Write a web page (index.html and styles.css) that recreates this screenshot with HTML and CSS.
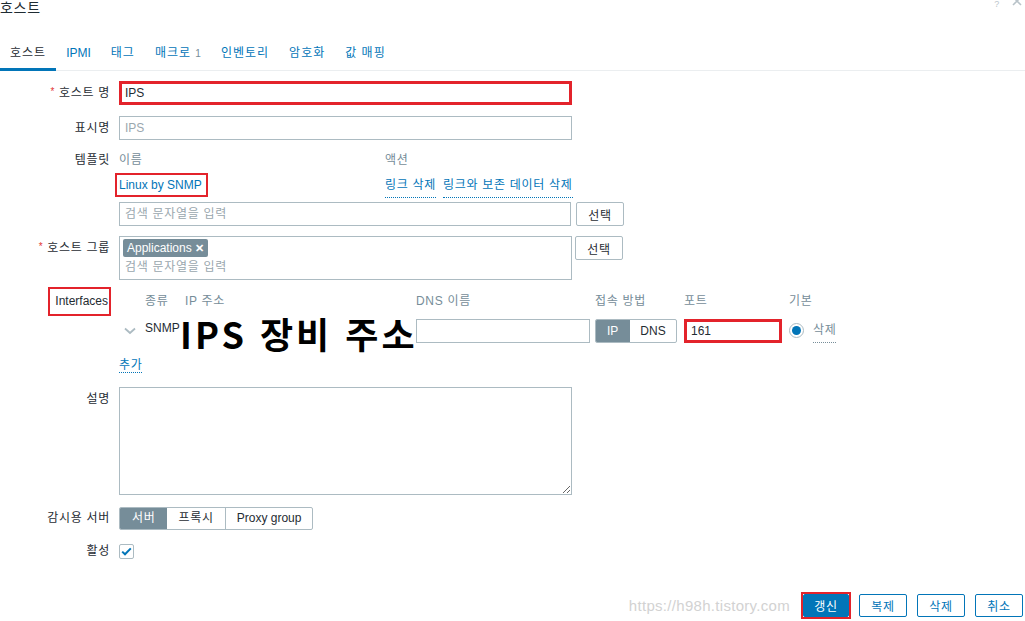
FILE: index.html
```html
<!DOCTYPE html>
<html lang="ko">
<head>
  <meta charset="UTF-8">
  <meta name="viewport" content="width=device-width, initial-scale=1.0">
  <title>호스트</title>
  <link rel="stylesheet" href="styles.css">
</head>
<body>
<div class="head">
  <h1 class="title">호스트</h1>
  <div class="head-tools">
    <span class="help">?</span>
    <span class="close">
      <svg width="10" height="10" viewBox="0 0 10 10"><path d="M1 1 L9 9 M9 1 L1 9" stroke="#b9c3c9" stroke-width="1.6" fill="none"/></svg>
    </span>
  </div>
</div>

<ul class="tabs">
  <li class="tab active">호스트</li>
  <li class="tab en">IPMI</li>
  <li class="tab">태그</li>
  <li class="tab">매크로 <span class="count en">1</span></li>
  <li class="tab">인벤토리</li>
  <li class="tab">암호화</li>
  <li class="tab">값 매핑</li>
</ul>

<form class="form">
  <div class="row r-host">
    <label class="lbl"><span class="req">*</span> 호스트 명</label>
    <div class="fld"><input class="input wide marked" type="text" value="IPS"></div>
  </div>

  <div class="row r-visible">
    <label class="lbl">표시명</label>
    <div class="fld"><input class="input wide" type="text" placeholder="IPS"></div>
  </div>

  <div class="row r-tpl-head">
    <label class="lbl">템플릿</label>
    <div class="fld tpl-grid">
      <span class="th">이름</span>
      <span class="th">액션</span>
    </div>
  </div>

  <div class="row r-tpl-link">
    <div class="lbl"></div>
    <div class="fld tpl-grid">
      <a class="link mark-link en">Linux by SNMP</a>
      <span class="actions"><a class="dotted">링크 삭제</a><a class="dotted">링크와 보존 데이터 삭제</a></span>
    </div>
  </div>

  <div class="row r-search">
    <div class="lbl"></div>
    <div class="fld with-btn">
      <input class="input search" type="text" placeholder="검색 문자열을 입력">
      <button type="button" class="btn-grey">선택</button>
    </div>
  </div>

  <div class="row r-group">
    <label class="lbl"><span class="req">*</span> 호스트 그룹</label>
    <div class="fld with-btn">
      <div class="multi">
        <span class="tag en">Applications <span class="tag-x">✕</span></span>
        <div class="multi-ph">검색 문자열을 입력</div>
      </div>
      <button type="button" class="btn-grey">선택</button>
    </div>
  </div>

  <div class="row r-if">
    <div class="lbl lbl-if"><span class="lbl-mark en">Interfaces</span></div>
    <div class="fld iface">
      <div class="if-grid if-head">
        <span></span>
        <span>종류</span>
        <span>IP 주소</span>
        <span>DNS 이름</span>
        <span>접속 방법</span>
        <span>포트</span>
        <span>기본</span>
      </div>
      <div class="if-grid if-row">
        <span class="chev">
          <svg width="12" height="8" viewBox="0 0 12 8"><path d="M1 1.5 L6 6 L11 1.5" stroke="#acbbc2" stroke-width="1.8" fill="none"/></svg>
        </span>
        <span class="if-type en">SNMP</span>
        <span><input class="input ip" type="text"></span>
        <span><input class="input dns" type="text"></span>
        <span class="seg seg-conn en">
          <span class="seg-item on">IP</span><span class="seg-item">DNS</span>
        </span>
        <span><input class="input port marked" type="text" value="161"></span>
        <span class="default">
          <span class="radio"><span class="radio-dot"></span></span>
          <a class="dotted grey">삭제</a>
        </span>
      </div>
      <div class="note-big">IPS 장비 주소</div>
    </div>
  </div>

  <div class="row r-add">
    <div class="lbl"></div>
    <div class="fld"><a class="dotted">추가</a></div>
  </div>

  <div class="row r-desc">
    <label class="lbl">설명</label>
    <div class="fld"><textarea class="input area"></textarea></div>
  </div>

  <div class="row r-server">
    <label class="lbl">감시용 서버</label>
    <div class="fld">
      <span class="seg seg-server">
        <span class="seg-item on">서버</span><span class="seg-item">프록시</span><span class="seg-item en">Proxy group</span>
      </span>
    </div>
  </div>

  <div class="row r-active">
    <label class="lbl">활성</label>
    <div class="fld">
      <span class="check">
        <svg width="11" height="9" viewBox="0 0 11 9"><path d="M1.2 4.6 L4 7.3 L9.8 1.4" stroke="#0275b8" stroke-width="2" fill="none"/></svg>
      </span>
    </div>
  </div>

  <div class="footer">
    <span class="watermark en">https://h98h.tistory.com</span>
    <span class="mark-btn"><button type="button" class="btn-main">갱신</button></span>
    <button type="button" class="btn-alt">복제</button>
    <button type="button" class="btn-alt">삭제</button>
    <button type="button" class="btn-alt">취소</button>
  </div>
</form>
</body>
</html>
```

FILE: styles.css
```css
* {
  box-sizing: border-box;
}

body {
  margin: 0;
  font-family: "Liberation Sans", "Noto Sans CJK KR", sans-serif;
  font-size: 12px;
  letter-spacing: 0.7px;
  color: #1f2c33;
  background-color: #ffffff;
}

/* latin-only text keeps normal spacing */
.en {
  letter-spacing: 0;
}

/* dialog head */
.head {
  display: flex;
  justify-content: space-between;
  height: 16px;
}

.title {
  margin: 0;
  font-size: 14px;
  font-weight: normal;
  line-height: 16px;
}

.head-tools {
  display: flex;
  gap: 12px;
  padding-right: 3px;
}

.help {
  color: #bcc6cc;
  font-size: 9px;
  line-height: 9px;
}

.close {
  margin-top: -5px;
}

/* tabs */
.tabs {
  list-style: none;
  margin: 21px 0 0;
  padding: 0;
  display: flex;
  border-bottom: 1px solid #ebeef0;
}

.tab {
  padding: 8px 10px 6px;
  line-height: 16px;
  letter-spacing: 1px;
  color: #0275b8;
  border-bottom: 3px solid transparent;
  margin-bottom: -1px;
}

.tab.en {
  letter-spacing: 0;
}

.tab.active {
  color: #1f2c33;
  border-bottom-color: #0275b8;
}

.count {
  font-size: 10px;
  color: #768d99;
}

/* form rows */
.form {
  margin-top: 10px;
}

.row {
  display: flex;
}

.lbl {
  flex: none;
  width: 119px;
  padding-right: 9px;
  text-align: right;
  line-height: 24px;
}

.fld {
  flex: 1;
  line-height: 24px;
}

.req {
  color: #e33734;
  font-size: 10px;
  vertical-align: top;
  position: relative;
  top: -1px;
}

.r-visible { margin-top: 11px; }
.r-tpl-head { margin-top: 8px; }
.r-tpl-link { margin-top: 1px; height: 24px; }
.r-search { margin-top: 5px; }
.r-group { margin-top: 10px; }
.r-if { margin-top: 9px; }
.r-add { margin-top: 11px; }
.r-desc { margin-top: 10px; }
.r-server { margin-top: 11px; }
.r-active { margin-top: 9px; }

/* inputs */
.input {
  display: block;
  height: 24px;
  border: 1px solid #acbbc2;
  border-radius: 0;
  padding: 0 5px;
  font-family: inherit;
  font-size: 12px;
  letter-spacing: 0;
  color: #1f2c33;
  background-color: #ffffff;
  outline: none;
}

.input::placeholder {
  color: #9aa7ae;
}

.wide {
  width: 453px;
}

.marked {
  border: 3px solid #e3232b;
  padding: 0 3px;
}

.with-btn {
  display: flex;
  align-items: flex-start;
}

.search {
  width: 452px;
  letter-spacing: 0.7px;
}

button {
  letter-spacing: inherit;
}

.btn-grey {
  margin-left: 5px;
  width: 48px;
  height: 24px;
  border: 1px solid #acbbc2;
  border-radius: 2px;
  background-color: #ffffff;
  color: #1f2c33;
  font-family: inherit;
  font-size: 12px;
  padding: 0;
}

.r-group .btn-grey {
  margin-left: 3px;
}

/* template table */
.tpl-grid {
  display: grid;
  grid-template-columns: 266px auto;
}

.th {
  color: #768d99;
}

.link {
  color: #0275b8;
}

.mark-link {
  display: block;
  width: max-content;
  border: 2px solid #e3232b;
  padding: 0 4px 0 2px;
  margin-left: -4px;
  line-height: 20px;
  height: 24px;
}

.actions {
  display: flex;
  gap: 7px;
}

.dotted {
  color: #0275b8;
  text-decoration: none;
  border-bottom: 1px dotted #0275b8;
}

.dotted.grey {
  color: #768d99;
  border-bottom-color: #768d99;
}

/* host group multiselect */
.multi {
  width: 453px;
  height: 44px;
  border: 1px solid #acbbc2;
  padding: 2px 3px;
  line-height: 18px;
}

.tag {
  display: inline-block;
  height: 18px;
  line-height: 18px;
  padding: 0 4px;
  background-color: #768d99;
  color: #ffffff;
  border-radius: 2px;
  vertical-align: top;
}

.tag-x {
  font-size: 11px;
  font-weight: bold;
}

.multi-ph {
  color: #9aa7ae;
  line-height: 20px;
  padding-left: 2px;
}

/* interfaces */
.lbl-if {
  height: 24px;
}

.lbl-mark {
  display: inline-block;
  border: 2px solid #e3232b;
  padding: 0 1px 0 5px;
  margin-right: -1px;
  margin-top: -2px;
  line-height: 25px;
  vertical-align: top;
}

.iface {
  position: relative;
}

.if-grid {
  display: grid;
  grid-template-columns: 26px 40px 231px 179px 89px 105px 1fr;
  align-items: center;
}

.if-head {
  color: #768d99;
}

.if-row {
  margin-top: 5px;
  height: 24px;
}

.chev {
  display: flex;
  padding-left: 5px;
}

.if-type {
  line-height: 20px;
  align-self: start;
}

.ip {
  width: 225px;
}

.dns {
  width: 174px;
}

.port {
  width: 98px;
  padding: 0 4px;
}

.seg {
  display: inline-flex;
  height: 24px;
  border: 1px solid #acbbc2;
  border-radius: 2px;
  overflow: hidden;
  width: max-content;
}

.seg-item {
  padding: 0 11px;
  line-height: 22px;
  border-left: 1px solid #acbbc2;
}

.seg-item:first-child {
  border-left: 0;
}

.seg-item.on {
  background-color: #768d99;
  color: #ffffff;
}

.seg .seg-item.on + .seg-item {
  border-left-color: #768d99;
}

.seg-conn .seg-item + .seg-item {
  padding: 0 10px;
}

.default {
  display: flex;
  align-items: center;
  gap: 9px;
}

.radio {
  width: 15px;
  height: 15px;
  border: 1px solid #acbbc2;
  border-radius: 50%;
  display: flex;
  align-items: center;
  justify-content: center;
}

.radio-dot {
  width: 9px;
  height: 9px;
  border-radius: 50%;
  background-color: #0275b8;
}

.note-big {
  position: absolute;
  left: 61px;
  top: 25px;
  width: 236px;
  height: 38px;
  background-color: #ffffff;
  color: #000000;
  font-family: "Noto Sans CJK KR", sans-serif;
  font-weight: bold;
  font-size: 36px;
  letter-spacing: 3px;
  line-height: 38px;
  white-space: nowrap;
}

/* description */
.area {
  width: 453px;
  height: 108px;
  resize: vertical;
  padding: 4px 5px;
}

/* monitored by */
.seg-server {
  height: 23px;
}

.seg-server .seg-item {
  line-height: 21px;
  padding: 0 11px;
}

.seg-server .seg-item:first-child {
  padding: 0 11px 0 12px;
}

.r-active .fld {
  display: flex;
  align-items: center;
  height: 24px;
}

.check {
  width: 15px;
  height: 15px;
  border: 1px solid #acbbc2;
  border-radius: 2px;
  display: flex;
  align-items: center;
  justify-content: center;
}

/* footer buttons */
.footer {
  margin-top: 29px;
  display: flex;
  justify-content: flex-end;
  align-items: center;
  gap: 10px;
  padding-right: 2px;
}

.watermark {
  color: #d2d2d2;
  font-size: 15px;
  letter-spacing: 0.3px;
  margin-right: 1px;
}

.mark-btn {
  display: flex;
  border: 2px solid #e3232b;
  margin-right: -2px;
}

.btn-main, .btn-alt {
  width: 48px;
  height: 23px;
  padding: 0;
  border: 1px solid #0275b8;
  border-radius: 2px;
  font-family: inherit;
  font-size: 12px;
}

.btn-main {
  width: 46px;
  background-color: #0275b8;
  color: #ffffff;
}

.btn-alt {
  background-color: #ffffff;
  color: #0275b8;
}
```
